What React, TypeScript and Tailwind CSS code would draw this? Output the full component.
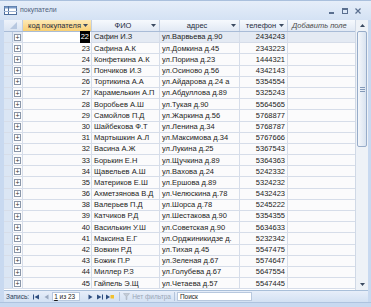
import React from "react";

const rows: [number, string, string, string][] = [
  [22, "Сафин И.З", "ул.Варвьева д.90", "2434243"],
  [23, "Сафина А.К", "ул.Домкина д.45", "2343223"],
  [24, "Конфеткина А.К", "ул.Порина д.23", "1444321"],
  [25, "Пончиков И.З", "ул.Осиново д.56", "4342143"],
  [26, "Тортикина А.А", "ул.Айдарова д.24 а", "5354554"],
  [27, "Карамелькин А.П", "ул.Абдуллова д.89", "5325243"],
  [28, "Воробьев А.Ш", "ул.Тукая д.90", "5564565"],
  [29, "Самойлов П.Д", "ул.Жаркина д.56", "5768877"],
  [30, "Шайбекова Ф.Т", "ул.Ленина д.34", "5768787"],
  [31, "Мартышкин А.Л", "ул.Максимова д.34", "5767666"],
  [32, "Васина А.Ж", "ул.Лукина д.25", "5367543"],
  [33, "Борькин Е.Н", "ул.Щучкина д.89", "5364363"],
  [34, "Щавельев А.Ш", "ул.Вахова д.24", "5242332"],
  [35, "Материков Е.Ш", "ул.Ершова д.89", "5324232"],
  [36, "Ахметзянова В.Д", "ул.Челюскина д.78", "5432423"],
  [38, "Валерьев П.Д", "ул.Шорса д.78", "5245222"],
  [39, "Катчиков Р.Д", "ул.Шестакова д.90", "5354355"],
  [40, "Василькин У.Ш", "ул.Советская д.90", "5634633"],
  [41, "Максина Е.Г", "ул.Орджиникидзе д.", "5232342"],
  [42, "Вовкин Р.Д", "ул.Тихая д.45", "5547475"],
  [43, "Божик П.Р", "ул.Зеленая д.67", "5574647"],
  [44, "Миллер Р.З", "ул.Голубева д.67", "5647554"],
  [45, "Гайпель Э.Щ", "ул.Четаева д.57", "5547445"],
];

const Arrow = () => (
  <svg width="5" height="3" viewBox="0 0 5 3" className="shrink-0">
    <polygon points="0,0 5,0 2.5,3" fill="#3b4a60" />
  </svg>
);

const HeadCell = ({ w, label, active }: { w: string; label: string; active?: boolean }) => (
  <div
    className={`${w} h-full flex items-center justify-between px-[3px] border-r border-[#c2cfe2] ${
      active ? "bg-gradient-to-b from-[#fde9b5] to-[#f8cf72]" : "bg-gradient-to-b from-[#f6f9fd] to-[#e1e9f4]"
    }`}
  >
    <span className="flex-1 text-center truncate">{label}</span>
    <Arrow />
  </div>
);

export default function App() {
  return (
    <div className="w-[371px] h-[307px] flex flex-col bg-[#c8d9f0] font-['Liberation_Sans',Arial,sans-serif] text-[7.5px] text-[#1b1b1b] overflow-hidden">
      {/* title bar */}
      <div className="h-[20px] flex items-center border-t border-[#aac0dd] bg-gradient-to-b from-[#e6eef9] to-[#d4e2f4] pl-[4px] pr-[10px]">
        <svg width="13" height="9" viewBox="0 0 13 9" className="mr-[3px] shrink-0">
          <rect x="0.5" y="0.5" width="12" height="8" fill="#fff" stroke="#4f6f9c" />
          <rect x="0.5" y="0.5" width="12" height="2" fill="#7b9bc8" />
          <line x1="4.5" y1="0" x2="4.5" y2="9" stroke="#4f6f9c" />
          <line x1="0" y1="5.5" x2="13" y2="5.5" stroke="#9fb4d2" />
        </svg>
        <span className="text-[7px] text-[#50627d]">покупатели</span>
        <div className="ml-auto w-[32px] h-[8px] flex items-center justify-between">
          <span className="w-[5px] h-[2px] bg-[#5a6f8f] mt-[4px]" />
          <span className="w-[6px] h-[6px] border border-[#5a6f8f] border-t-2" />
          <svg width="6" height="6" viewBox="0 0 6 6">
            <path d="M0.5 0.5 L5.5 5.5 M5.5 0.5 L0.5 5.5" stroke="#5a6f8f" strokeWidth="1.2" />
          </svg>
        </div>
      </div>

      {/* body */}
      <div className="h-[282px] flex flex-col pl-[4px] pr-[3px]">
        <div className="h-[270px] flex bg-white">
          <div className="w-[351px] flex flex-col">
            {/* header */}
            <div className="h-[12px] flex border-b border-[#a9bcd7] text-[#1f2b3d]">
              <div className="w-[19px] h-full flex items-center justify-center border-r border-[#c2cfe2] bg-gradient-to-b from-[#eef3fa] to-[#dae4f2]">
                <svg width="7" height="7" viewBox="0 0 7 7">
                  <polygon points="7,0 7,7 0,7" fill="#b7c8e0" />
                </svg>
              </div>
              <HeadCell w="w-[69px]" label="код покупателя" active />
              <HeadCell w="w-[68px]" label="ФИО" />
              <HeadCell w="w-[80px]" label="адрес" />
              <HeadCell w="w-[48px]" label="телефон" />
              <div className="w-[67px] h-full flex items-center px-[4px] italic text-[#4a4a4a] bg-gradient-to-b from-[#f6f9fd] to-[#e1e9f4]">
                Добавить поле
              </div>
            </div>
            {/* rows */}
            {rows.map(([id, name, addr, tel], i) => (
              <div
                key={id}
                className={`h-[11.2px] flex border-b border-[#d6dde9] ${i === 0 ? "bg-[#e4eaf3]" : "bg-[#fbfbfc]"}`}
              >
                <div className="w-[9px] h-full bg-[#dbe6f4] border-r border-[#b9c9e0]" />
                <div className="w-[10px] h-full flex items-center justify-center border-r border-[#d6dde9]">
                  <span className="w-[7px] h-[7px] border border-[#8a96a8] bg-white flex items-center justify-center text-[7px] leading-none text-[#333]">
                    +
                  </span>
                </div>
                <div className={`w-[69px] h-full flex items-center justify-end pr-[1px] border-r border-[#d6dde9] ${i === 0 ? "bg-white" : ""}`}>
                  <span className={i === 0 ? "bg-black text-white px-[1px]" : ""}>{id}</span>
                </div>
                <div className="w-[68px] h-full flex items-center px-[2px] border-r border-[#d6dde9] whitespace-nowrap overflow-hidden">
                  {name}
                </div>
                <div className="w-[80px] h-full flex items-center px-[2px] border-r border-[#d6dde9] whitespace-nowrap overflow-hidden">
                  {addr}
                </div>
                <div className="w-[48px] h-full flex items-center justify-end px-[2px] border-r border-[#d6dde9]">
                  {tel}
                </div>
                <div className="w-[67px] h-full" />
              </div>
            ))}
          </div>

          {/* scrollbar */}
          <div className="w-[13px] flex flex-col bg-[#eef2f7] border-l border-[#d0d9e6]">
            <div className="h-[11px] flex items-center justify-center">
              <svg width="5" height="3" viewBox="0 0 5 3">
                <polygon points="0,3 5,3 2.5,0" fill="#3b4a60" />
              </svg>
            </div>
            <div className="h-[116px] mx-[1px] rounded-[2px] border border-[#97acc9] bg-gradient-to-r from-[#f4f7fb] to-[#d9e3f0] flex items-center justify-center">
              <div className="flex flex-col gap-[1px]">
                <span className="w-[5px] h-[1px] bg-[#8399b8]" />
                <span className="w-[5px] h-[1px] bg-[#8399b8]" />
                <span className="w-[5px] h-[1px] bg-[#8399b8]" />
              </div>
            </div>
            <div className="flex-1" />
            <div className="h-[12px] flex items-center justify-center">
              <svg width="5" height="3" viewBox="0 0 5 3">
                <polygon points="0,0 5,0 2.5,3" fill="#3b4a60" />
              </svg>
            </div>
          </div>
        </div>

        {/* navigation bar */}
        <div className="h-[12px] flex items-center border-t border-[#a9bfd9] bg-gradient-to-b from-[#e7eef9] to-[#d3e1f3] text-[6.5px] text-[#2b3c56] pl-[2px]">
          <span className="mr-[4px]">Запись:</span>
          <svg width="6" height="6" viewBox="0 0 6 6" className="mr-[5px]">
            <rect x="0" y="0.5" width="1" height="5" fill="#2f4f80" />
            <polygon points="6,0.5 6,5.5 1.5,3" fill="#2f4f80" />
          </svg>
          <svg width="5" height="6" viewBox="0 0 5 6" className="mr-[3px]">
            <polygon points="4.5,0.5 4.5,5.5 0.5,3" fill="#9aa9c0" />
          </svg>
          <div className="w-[28px] h-[9px] bg-white border border-[#b8c8de] flex items-center px-[1px] text-[#1a1a1a] mr-[8px]">
            <span className="underline">1</span>&nbsp;из 23
          </div>
          <svg width="5" height="6" viewBox="0 0 5 6" className="mr-[4px]">
            <polygon points="0.5,0.5 0.5,5.5 4.5,3" fill="#2f4f80" />
          </svg>
          <svg width="6" height="6" viewBox="0 0 6 6" className="mr-[3px]">
            <polygon points="0,0.5 0,5.5 4.5,3" fill="#2f4f80" />
            <rect x="5" y="0.5" width="1" height="5" fill="#2f4f80" />
          </svg>
          <svg width="8" height="6" viewBox="0 0 8 6" className="mr-[5px]">
            <polygon points="0,0.5 0,5.5 4,3" fill="#2f4f80" />
            <rect x="4.5" y="1" width="3.5" height="3.5" fill="#f2c12e" />
          </svg>
          <span className="w-[1px] h-[9px] bg-[#b3c4dc] mr-[3px]" />
          <svg width="7" height="7" viewBox="0 0 7 7" className="mr-[2px]">
            <polygon points="0.5,0.5 6.5,0.5 4,3.5 4,6.5 3,6.5 3,3.5" fill="#c3cbd6" stroke="#a5afbd" strokeWidth="0.5" />
          </svg>
          <span className="text-[#9aa6b6] mr-[3px]">Нет фильтра</span>
          <span className="w-[1px] h-[9px] bg-[#b3c4dc] mr-[2px]" />
          <div className="w-[75px] h-[9px] bg-white border border-[#b8c8de] flex items-center px-[2px] text-[#1a1a1a]">
            Поиск
          </div>
        </div>
      </div>

      <div className="flex-1 border-t border-[#aec3df]" />
    </div>
  );
}
